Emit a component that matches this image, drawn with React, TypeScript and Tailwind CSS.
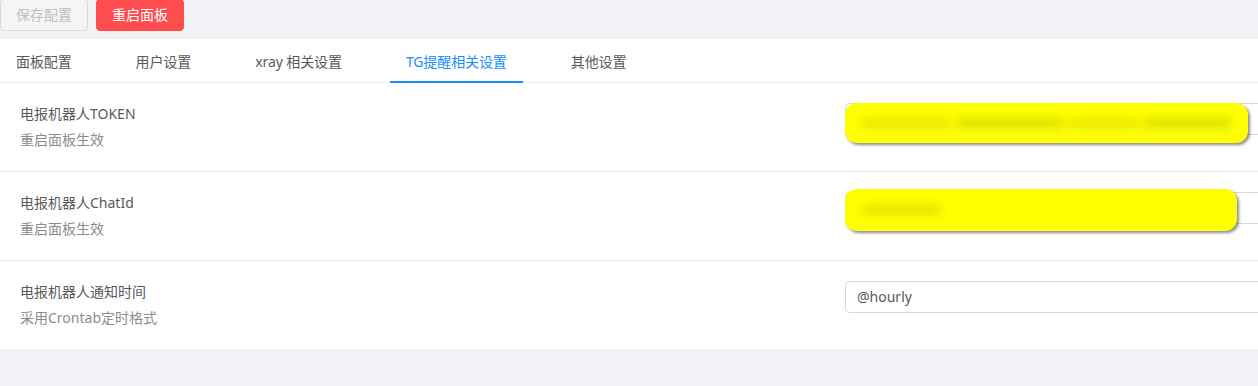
import React from 'react';

const tabs = ['面板配置', '用户设置', 'xray 相关设置', 'TG提醒相关设置', '其他设置'];

type Setting = {
  title: string;
  desc: string;
  value: string;
  mask?: { size: string; smudges: { w: string; o: string }[] };
};

const settings: Setting[] = [
  {
    title: '电报机器人TOKEN',
    desc: '重启面板生效',
    value: '',
    mask: {
      size: 'w-[403px] h-[40px] top-[0px]',
      smudges: [
        { w: 'w-[90px]', o: 'opacity-50' },
        { w: 'w-[110px]', o: 'opacity-70' },
        { w: 'w-[70px]', o: 'opacity-50' },
        { w: 'w-[90px]', o: 'opacity-70' },
      ],
    },
  },
  {
    title: '电报机器人ChatId',
    desc: '重启面板生效',
    value: '',
    mask: {
      size: 'w-[392px] h-[42px] top-[-3px]',
      smudges: [{ w: 'w-[80px]', o: 'opacity-60' }],
    },
  },
  { title: '电报机器人通知时间', desc: '采用Crontab定时格式', value: '@hourly' },
];

export default function App() {
  return (
    <div
      className="w-[1258px] h-[386px] overflow-hidden bg-[#f0f2f5] text-sm"
      style={{ fontFamily: '"Noto Sans", "Noto Sans CJK SC", sans-serif' }}
    >
      {/* Actions */}
      <div className="flex gap-2 h-[40px] -mt-px">
        <button className="h-8 px-[15px] rounded border border-[#d9d9d9] bg-[#f5f5f5] text-[#bfbfbf] leading-[22px]">
          保存配置
        </button>
        <button className="h-8 px-[15px] rounded border border-[#ff4d4f] bg-[#ff4d4f] text-white leading-[22px]">
          重启面板
        </button>
      </div>

      <div className="bg-white">
        {/* Tabs */}
        <div className="flex h-[44px] border-b border-[#e8e8e8] tracking-[-0.1px]">
          {tabs.map((t, i) => (
            <div
              key={t}
              className={
                'mr-8 px-4 pt-3 leading-[22px] -mb-px border-b-2 ' +
                (i === 3 ? 'text-[#1890ff] border-[#1890ff]' : 'text-[#595959] border-transparent')
              }
            >
              {t}
            </div>
          ))}
        </div>

        {/* Settings list */}
        {settings.map((s, i) => (
          <div
            key={s.title}
            className={'flex p-5 ' + (i < settings.length - 1 ? 'border-b border-[#e8e8e8]' : '')}
          >
            <div className="w-[825px] shrink-0">
              <div className="text-[#595959] leading-[22px] mb-1">{s.title}</div>
              <div className="text-[#8c8c8c] leading-[22px]">{s.desc}</div>
            </div>
            <div className="relative w-[800px] shrink-0">
              <div className="h-8 rounded border border-[#d9d9d9] px-[11px] leading-[30px] text-[#595959]">
                {s.value}
              </div>
              {s.mask && (
                <div
                  className={
                    'absolute left-0 rounded-[12px] bg-[#ffff00] shadow-[2px_2px_3px_rgba(0,0,0,0.45)] flex items-center gap-1 px-4 overflow-hidden ' +
                    s.mask.size
                  }
                >
                  {s.mask.smudges.map((m, j) => (
                    <div key={j} className={'h-[10px] rounded-full bg-[#d0d000] blur-[5px] ' + m.w + ' ' + m.o} />
                  ))}
                </div>
              )}
            </div>
          </div>
        ))}
      </div>
    </div>
  );
}
